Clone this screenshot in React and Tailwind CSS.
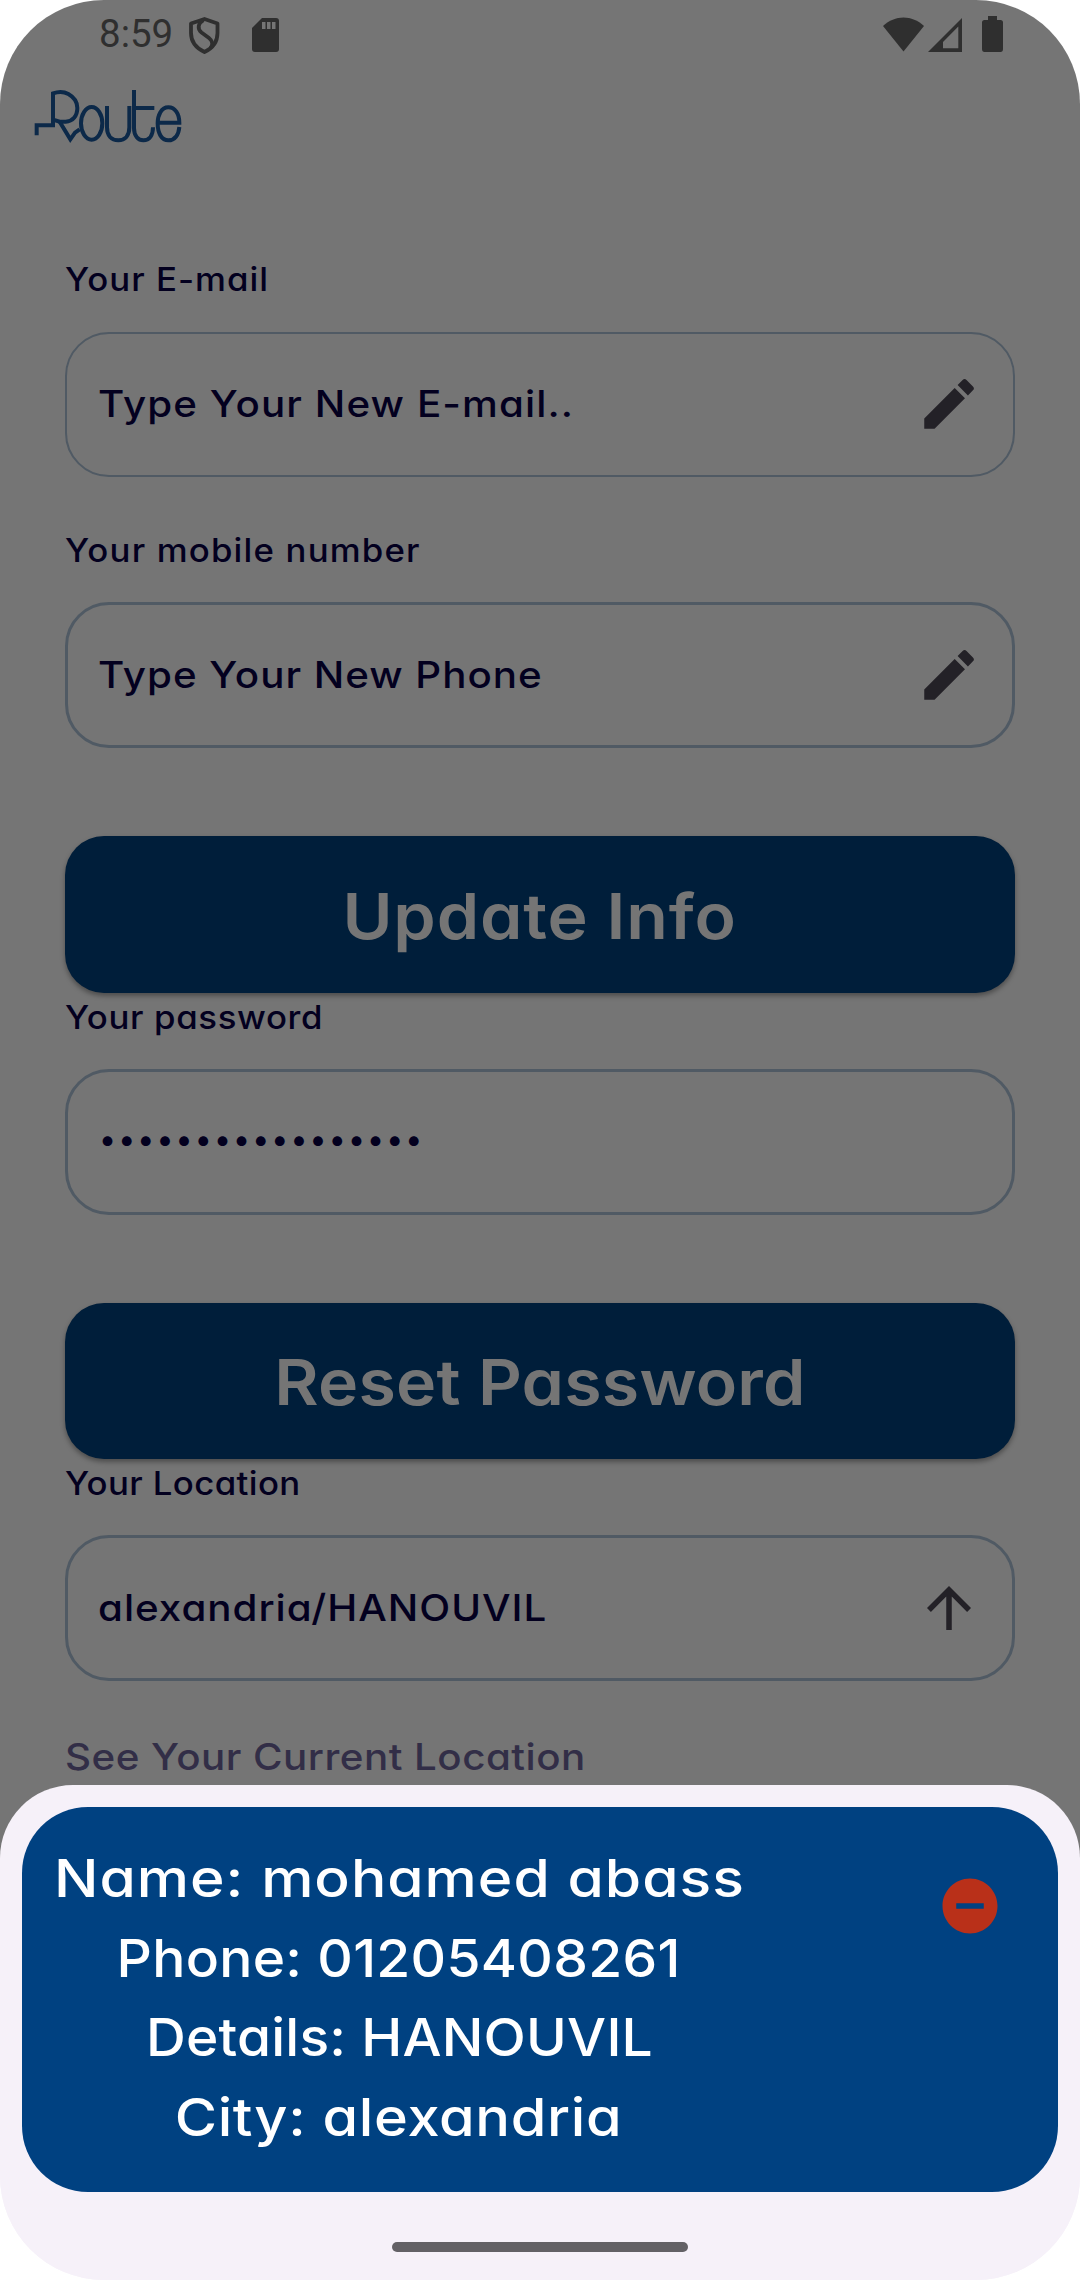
import React from "react";

function StatusBar() {
  return (
    <div className="flex h-[70px] items-start text-[#2f2f2f]">
      <span className="ml-[99px] mt-[11px] h-[46px] w-[74px] whitespace-nowrap font-['Roboto',sans-serif] text-[38.5px] leading-[46px]">
        8:59
      </span>
      <svg className="ml-[16px] mt-[17px] h-[37px] w-[31px]" viewBox="0 0 31 37" fill="none" stroke="currentColor" strokeWidth="3.8" strokeLinejoin="round">
        <path d="M15.5 2 L28.5 6.5 V16 C28.5 25 23 31.5 15.5 35 C8 31.5 2 25 2 16 V6.5 Z" />
        <path d="M14.5 3 C9 6 8 12 12.5 15.5 L20 21 C24 24 24 28 21.5 31" />
      </svg>
      <svg className="ml-[32px] mt-[18px] h-[34px] w-[27px]" viewBox="0 0 27 34">
        <path fill="currentColor" d="M10 0 H24 Q27 0 27 3 V31 Q27 34 24 34 H3 Q0 34 0 31 V10 Z" />
        <path fill="#757575" d="M10 4h3.5v7H10zM15 4h3.5v7H15zM20 4h3.5v7H20z" />
      </svg>
      <svg className="ml-auto mt-[17px] h-[35px] w-[41px]" viewBox="0 0 41 35" fill="currentColor">
        <path d="M20.5 34.5 L0 9 C12 -2.5 29 -2.5 41 9 Z" />
      </svg>
      <svg className="ml-[4px] mt-[18px] h-[34px] w-[34px]" viewBox="0 0 34 34" fill="currentColor">
        <path fillRule="evenodd" d="M34 0 V34 H0 Z M30.3 8.5 L15 24 V30.3 H30.3 Z" />
      </svg>
      <svg className="ml-[20px] mr-[77px] mt-[16px] h-[36px] w-[21px]" viewBox="0 0 21 36" fill="currentColor">
        <path d="M6 0 H15 V4 H18.5 Q21 4 21 6.5 V33 Q21 36 18.5 36 H2.5 Q0 36 0 33 V6.5 Q0 4 2.5 4 H6 Z" />
      </svg>
    </div>
  );
}

function RouteLogo() {
  return (
    <svg className="ml-[25px] mt-[10px] h-[70px] w-[170px]" viewBox="0 0 510 210" fill="none" stroke="#0c2949" strokeWidth="12" role="img" aria-label="Route">
      <path d="M35 166 V136 H84 V40 C98 35 116 34 130 42 C148 52 157 66 157 84 C157 108 143 124 122 125 H104 L84 119" />
      <path d="M104 125 L136 178 L150 158 L164 148" />
      <ellipse cx="200" cy="130" rx="32" ry="49" />
      <path d="M246 78 V142 C246 167 259 181 280 181 C300 181 313 167 313 142 V78" />
      <path d="M327 30 V145 C327 168 340 181 355 181 C373 181 384 166 384 142 M327 84 H388" />
      <path d="M398 128 H463 C463 101 450 82 430 82 C409 82 398 105 398 130 C398 160 410 181 430 181 C449 181 461 165 463 141" />
    </svg>
  );
}

function PencilIcon() {
  return (
    <svg className="size-[66px] shrink-0" viewBox="0 0 24 24" fill="#232127">
      <path d="M3 17.25V21h3.75L17.81 9.94l-3.75-3.75L3 17.25zM20.71 7.04a.996.996 0 0 0 0-1.41l-2.34-2.34a.996.996 0 0 0-1.41 0l-1.83 1.83 3.75 3.75 1.83-1.83z" />
    </svg>
  );
}

function ArrowUpIcon() {
  return (
    <svg className="size-[66px] shrink-0" viewBox="0 0 24 24" fill="#232127">
      <path d="M4 12l1.41 1.41L11 7.83V20h2V7.83l5.58 5.59L20 12l-8-8-8 8z" />
    </svg>
  );
}

function Label({ className, children }) {
  return (
    <div className={`h-[48px] origin-left scale-x-[1.07] whitespace-nowrap pt-[1px] text-[32.5px] font-[460] leading-[48px] text-[#03001f] ${className}`}>
      {children}
    </div>
  );
}

function Field({ className, icon, children }) {
  return (
    <div className={`flex items-center justify-between rounded-[44px] border-[#505a64] text-[37px] font-[460] leading-[48px] text-[#03001f] ${className}`}>
      <span className="inline-block origin-left scale-x-[1.09] whitespace-nowrap">{children}</span>
      {icon}
    </div>
  );
}

function PasswordField({ className, length }) {
  return (
    <div className={`flex items-center rounded-[44px] border-[3px] border-[#505a64] pb-[6px] pl-[30px] text-[31px] font-medium leading-[48px] text-[#03001f] ${className}`}>
      {Array.from({ length }, (_, i) => (
        <span key={i} className="w-[19.15px] text-center">•</span>
      ))}
    </div>
  );
}

function ActionButton({ className, children }) {
  return (
    <button className={`flex items-center justify-center whitespace-nowrap rounded-[39px] bg-[#001e3a] pt-[3px] text-[63px] font-semibold text-[#757575] shadow-[0_3px_5px_rgba(0,0,0,0.35)] ${className}`}>
      <span className="inline-block scale-x-[1.08]">{children}</span>
    </button>
  );
}

function AddressSheet() {
  return (
    <div className="absolute inset-x-0 bottom-0 flex h-[495px] flex-col items-center rounded-t-[73px] bg-[#f6f1f9] px-[22px] pt-[22px]">
      <div className="flex h-[385px] w-full items-start justify-between rounded-[66px] bg-[#004181] pl-[33px] pr-[55px] pt-[32px] text-white">
        <div className="flex w-[688px] flex-col items-center whitespace-nowrap text-[52.5px] font-[480] leading-[79.6px]">
          <div className="scale-x-[1.12] tracking-[0.9px]">Name: mohamed abass</div>
          <div className="scale-x-[1.05] tracking-[0.27px]">Phone: 01205408261</div>
          <div className="scale-x-[1.05] tracking-[0.2px]">Details: HANOUVIL</div>
          <div className="scale-x-[1.1] tracking-[0.6px]">City: alexandria</div>
        </div>
        <svg className="mt-[34px] size-[66px] shrink-0" viewBox="0 0 24 24" fill="#b93019">
          <path d="M12 2C6.48 2 2 6.48 2 12s4.48 10 10 10 10-4.48 10-10S17.52 2 12 2zm5 11H7v-2h10v2z" />
        </svg>
      </div>
      <div className="mt-[50px] h-[10px] w-[296px] rounded-full bg-[#636166]" />
    </div>
  );
}

export default function App() {
  return (
    <div className="h-[2280px] w-[1080px] bg-white">
      <main className="relative h-full overflow-hidden rounded-[104px] bg-[linear-gradient(#757575_1900px,#f6f1f9_1900px)] font-['Inter',sans-serif] [font-feature-settings:'cv11']">
        <StatusBar />
        <RouteLogo />
        <div className="mt-[105px] flex flex-col px-[65px]">
          <Label className="tracking-[0.95px]">Your E-mail</Label>
          <Field className="mt-[29px] h-[145px] border-2 pb-[1px] pl-[31px] pr-[31px] tracking-[1px]" icon={<PencilIcon />}>
            Type Your New E-mail..
          </Field>
          <Label className="mt-[49px] tracking-[1.1px]">Your mobile number</Label>
          <Field className="mt-[28px] h-[146px] border-[3px] pb-[1px] pl-[30px] pr-[30px] tracking-[0.9px]" icon={<PencilIcon />}>
            Type Your New Phone
          </Field>
          <ActionButton className="mt-[88px] h-[157px] tracking-[0.8px]">Update Info</ActionButton>
          <Label className="tracking-[0.6px]">Your password</Label>
          <PasswordField className="mt-[28px] h-[146px]" length={17} />
          <ActionButton className="mt-[88px] h-[156px] tracking-[0.18px]">Reset Password</ActionButton>
          <Label className="tracking-[0.36px]">Your Location</Label>
          <Field className="mt-[28px] h-[146px] border-[3px] pb-[1px] pl-[30px] pr-[30px] tracking-[0.9px]" icon={<ArrowUpIcon />}>
            alexandria/HANOUVIL
          </Field>
          <div className="mt-[52px] h-[48px] origin-left scale-x-[1.09] whitespace-nowrap text-[37px] font-[460] leading-[48px] tracking-[0.44px] text-[#322e47]">
            See Your Current Location
          </div>
        </div>
        <AddressSheet />
      </main>
    </div>
  );
}
